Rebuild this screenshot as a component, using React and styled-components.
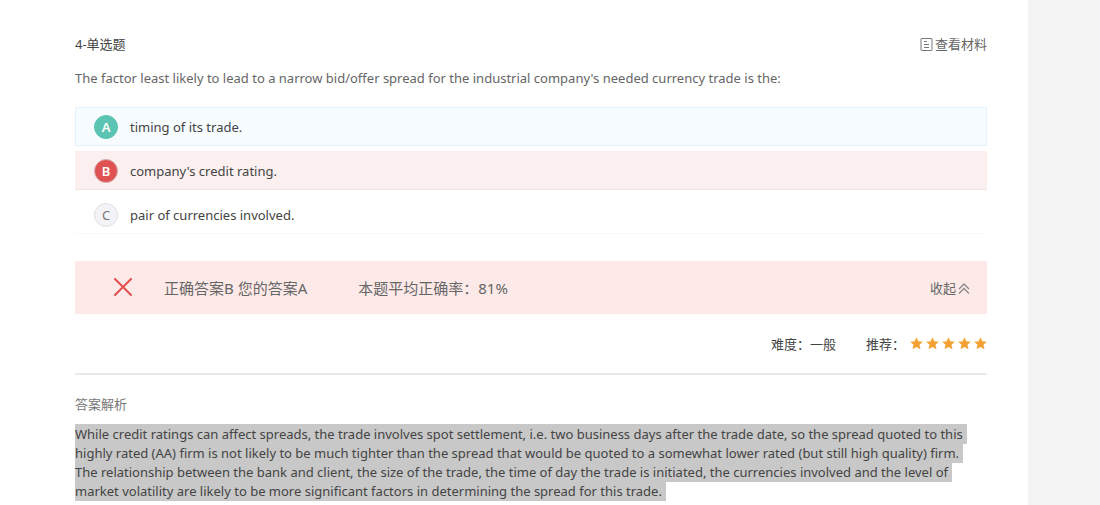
import React, { useState } from "react";
import styled, { createGlobalStyle } from "styled-components";

const GlobalStyle = createGlobalStyle`
  * {
    box-sizing: border-box;
  }

  body {
    margin: 0;
    background: #f3f3f3;
    color: #444;
    font-family: "Noto Sans", "Noto Sans CJK SC", sans-serif;
    font-size: 13px;
    line-height: 20px;
  }
`;

const Page = styled.div`
  display: flex;
  min-height: 100vh;
`;

const Content = styled.main`
  flex: 1;
  min-width: 0;
  padding: 34px 41px 5px 75px;
  background: #fff;
`;

const SideStrip = styled.aside`
  width: 72px;
  background: #f3f3f3;
`;

const TopRow = styled.header`
  display: flex;
  justify-content: space-between;
  align-items: center;
`;

const QuestionType = styled.h1`
  margin: 0;
  font-size: 13px;
  font-weight: 400;
`;

const TextButton = styled.button`
  display: flex;
  align-items: center;
  gap: 2px;
  padding: 0;
  border: 0;
  background: none;
  color: #666;
  font: inherit;
  cursor: pointer;
`;

const Options = styled.fieldset`
  min-width: 0;
  margin: 0;
  padding: 0;
  border: 0;
`;

const Question = styled.legend`
  padding: 14px 0 19px;
  color: #666;
`;

const rowColors = {
  picked: { background: "#f6fcff", border: "#e6f3fc", bottom: "#e6f3fc" },
  correct: { background: "#fbf0ef", border: "#fbf0ef", bottom: "#f5e0dc" },
  plain: { background: "#fff", border: "#fff", bottom: "#f8f8f8" },
};

const badgeColors = {
  picked: { background: "#5cc4b3", border: "#5cc4b3", text: "#fff" },
  correct: { background: "#e05252", border: "#d8b0b0", text: "#fff" },
  plain: { background: "#f3f2f7", border: "#dfdfe2", text: "#777" },
};

const OptionRow = styled.label`
  display: flex;
  align-items: center;
  gap: 12px;
  height: 39px;
  margin-bottom: 5px;
  padding: 0 18px;
  border: 1px solid ${(props) => rowColors[props.$state].border};
  border-bottom-color: ${(props) => rowColors[props.$state].bottom};
  background: ${(props) => rowColors[props.$state].background};
  cursor: pointer;

  &:last-child {
    margin-bottom: 0;
  }
`;

const OptionInput = styled.input`
  position: absolute;
  opacity: 0;
  pointer-events: none;
`;

const Badge = styled.span`
  display: flex;
  align-items: center;
  justify-content: center;
  width: 24px;
  height: 24px;
  border: 1px solid ${(props) => badgeColors[props.$state].border};
  border-radius: 50%;
  background: ${(props) => badgeColors[props.$state].background};
  color: ${(props) => badgeColors[props.$state].text};
  font-weight: ${(props) => (props.$state === "plain" ? 400 : 600)};
`;

const ResultBar = styled.section`
  display: flex;
  align-items: center;
  height: 53px;
  margin-top: 27px;
  padding: 0 17px 0 38px;
  background: #fde9e8;
  color: #666;
`;

const ResultText = styled.span`
  margin-left: ${(props) => props.$gap};
  font-size: 15px;
`;

const Spacer = styled.div`
  flex: 1;
`;

const Meta = styled.div`
  display: flex;
  justify-content: flex-end;
  align-items: center;
  gap: 30px;
  height: 61px;
  border-bottom: 2px solid #e9e9e9;
`;

const Rating = styled.div`
  display: flex;
  align-items: center;
  gap: 5px;
`;

const Stars = styled.div`
  display: flex;
  gap: 3px;
`;

const AnalysisTitle = styled.h2`
  margin: 19px 0 11px;
  color: #777;
  font-size: 13px;
  font-weight: 400;
`;

const Analysis = styled.p`
  margin: 0;
  padding-right: 15px;
  line-height: 19px;
`;

const Highlight = styled.mark`
  padding: 1px 4px 1px 0;
  background: #c8c8c8;
  color: #444;
  box-decoration-break: clone;
  -webkit-box-decoration-break: clone;
`;

const MaterialIcon = () => (
  <svg width="13" height="13" viewBox="0 0 13 13" fill="none" stroke="#777">
    <rect x="1" y="0.5" width="11" height="12" rx="0.5" />
    <path d="M4 3.5h3M4 6.5h5M4 9.5h5" />
  </svg>
);

const WrongIcon = () => (
  <svg width="20" height="20" viewBox="0 0 20 20" fill="none">
    <path
      d="M2 1l16 16M18 1L2 17"
      stroke="#e25050"
      strokeWidth="2"
      strokeLinecap="round"
    />
  </svg>
);

const CollapseIcon = ({ open }) => (
  <svg
    width="12"
    height="12"
    viewBox="0 0 12 12"
    fill="none"
    stroke="#888"
    strokeWidth="1.3"
  >
    <path
      d={
        open
          ? "M1 7L6 2l5 5M1 11.5L6 6.5l5 5"
          : "M1 1l5 5 5-5M1 5.5l5 5 5-5"
      }
    />
  </svg>
);

const StarIcon = () => (
  <svg width="13" height="13" viewBox="0 0 12 12">
    <path
      d="M6 0.2l1.7 3.8 4.2.4-3.2 2.8 1 4.2L6 9.2l-3.7 2.2 1-4.2L.1 4.4 4.3 4z"
      fill="#f6a033"
    />
  </svg>
);

const options = [
  { letter: "A", text: "timing of its trade.", state: "picked" },
  { letter: "B", text: "company's credit rating.", state: "correct" },
  { letter: "C", text: "pair of currencies involved.", state: "plain" },
];

const App = () => {
  const [answer, setAnswer] = useState("A");
  const [open, setOpen] = useState(true);

  return (
    <>
      <GlobalStyle />
      <Page>
        <Content>
          <TopRow>
            <QuestionType>4-单选题</QuestionType>
            <TextButton type="button">
              <MaterialIcon />
              查看材料
            </TextButton>
          </TopRow>

          <Options>
            <Question>
              The factor least likely to lead to a narrow bid/offer spread for
              the industrial company's needed currency trade is the:
            </Question>
            {options.map(({ letter, text, state }) => (
              <OptionRow key={letter} $state={state}>
                <OptionInput
                  type="radio"
                  name="answer"
                  value={letter}
                  checked={answer === letter}
                  onChange={() => setAnswer(letter)}
                />
                <Badge $state={state}>{letter}</Badge>
                {text}
              </OptionRow>
            ))}
          </Options>

          <ResultBar>
            <WrongIcon />
            <ResultText $gap="31px">正确答案B 您的答案A</ResultText>
            <ResultText $gap="51px">本题平均正确率：81%</ResultText>
            <Spacer />
            <TextButton type="button" onClick={() => setOpen(!open)}>
              收起
              <CollapseIcon open={open} />
            </TextButton>
          </ResultBar>

          {open && (
            <>
              <Meta>
                <span>难度：一般</span>
                <Rating>
                  推荐：
                  <Stars>
                    {[1, 2, 3, 4, 5].map((n) => (
                      <StarIcon key={n} />
                    ))}
                  </Stars>
                </Rating>
              </Meta>

              <AnalysisTitle>答案解析</AnalysisTitle>
              <Analysis>
                <Highlight>
                  While credit ratings can affect spreads, the trade involves
                  spot settlement, i.e. two business days after the trade date,
                  so the spread quoted to this highly rated (AA) firm is not
                  likely to be much tighter than the spread that would be quoted
                  to a somewhat lower rated (but still high quality) firm. The
                  relationship between the bank and client, the size of the
                  trade, the time of day the trade is initiated, the currencies
                  involved and the level of market volatility are likely to be
                  more significant factors in determining the spread for this
                  trade.
                </Highlight>
              </Analysis>
            </>
          )}
        </Content>
        <SideStrip />
      </Page>
    </>
  );
};

export default App;
